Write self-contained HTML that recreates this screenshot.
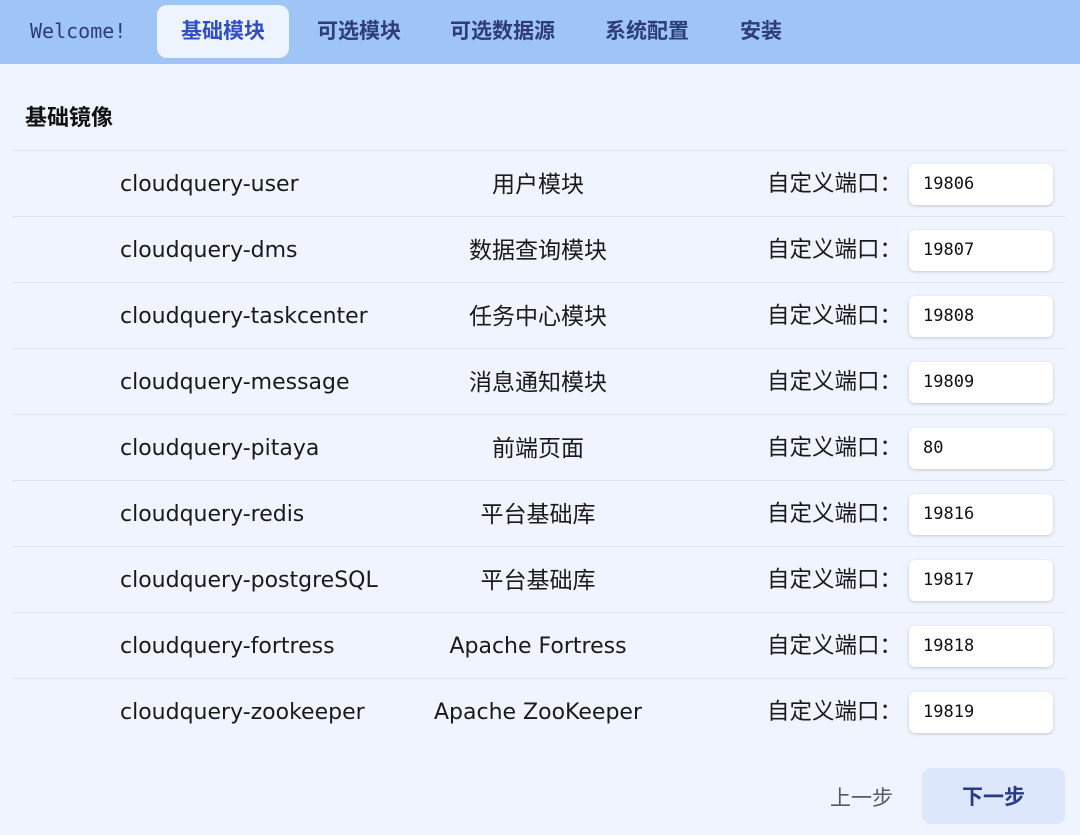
<!DOCTYPE html>
<html><head><meta charset="utf-8"><style>
*{margin:0;padding:0;box-sizing:border-box}
body{width:1080px;height:835px;background:#eff4fe;font-family:"DejaVu Sans","Noto Sans CJK SC",sans-serif;position:relative;overflow:hidden;color:#1a1a1a}
.hdr{position:absolute;left:0;top:0;width:1080px;height:64px;background:#9fc4f6}
.tab{position:absolute;top:5px;height:53px;line-height:53px;font-size:21px;color:#2e3d78;font-weight:bold;font-family:"Liberation Sans","Noto Sans CJK SC",sans-serif}
.act{background:#eef4fe;border-radius:10px;color:#2f4fc4;width:132px;left:157px;text-align:center}
.wel{font-family:"DejaVu Sans Mono",monospace;font-weight:normal;left:30px;color:#2e3d78;font-size:20px}
h2{position:absolute;left:25px;top:100px;font-size:22px;font-weight:bold;color:#111;font-family:"Liberation Sans","Noto Sans CJK SC",sans-serif}
.row{position:absolute;left:12px;width:1053px;height:66px;border-top:1px solid #dfe3ec}
.n{position:absolute;left:108px;top:1px;line-height:66px;font-size:22px;white-space:nowrap}
.m{position:absolute;left:376px;width:300px;text-align:center;top:1px;line-height:66px;font-size:22px;white-space:nowrap}
.l{position:absolute;left:755px;top:-2px;line-height:66px;font-size:22.5px;font-family:"Noto Sans CJK SC",sans-serif}
.i{position:absolute;left:897px;top:13px;width:144px;height:41px;background:#fff;border-radius:6px;box-shadow:0 1px 3px rgba(0,0,0,.18);font-family:"DejaVu Sans Mono",monospace;font-size:17px;line-height:41px;padding-left:14px;color:#111}
.prev{position:absolute;left:830px;top:783px;font-size:21px;color:#555b66;font-family:"Noto Sans CJK SC",sans-serif;line-height:28px}
.next{position:absolute;left:922px;top:768px;width:143px;height:56px;background:#dce7fb;border-radius:9px;text-align:center;line-height:56px;font-size:21px;color:#2b3a88;font-weight:bold;font-family:"Noto Sans CJK SC",sans-serif}
.m.c{font-size:23px}
</style></head><body>
<div class="hdr">
<div class="tab wel">Welcome!</div>
<div class="tab act">基础模块</div>
<div class="tab" style="left:317px">可选模块</div>
<div class="tab" style="left:450px">可选数据源</div>
<div class="tab" style="left:605px">系统配置</div>
<div class="tab" style="left:740px">安装</div>
</div>
<h2>基础镜像</h2>
<div class="row" style="top:150px"><div class="n">cloudquery-user</div><div class="m c">用户模块</div><div class="l">自定义端口：</div><div class="i">19806</div></div>
<div class="row" style="top:216px"><div class="n">cloudquery-dms</div><div class="m c">数据查询模块</div><div class="l">自定义端口：</div><div class="i">19807</div></div>
<div class="row" style="top:282px"><div class="n">cloudquery-taskcenter</div><div class="m c">任务中心模块</div><div class="l">自定义端口：</div><div class="i">19808</div></div>
<div class="row" style="top:348px"><div class="n">cloudquery-message</div><div class="m c">消息通知模块</div><div class="l">自定义端口：</div><div class="i">19809</div></div>
<div class="row" style="top:414px"><div class="n">cloudquery-pitaya</div><div class="m c">前端页面</div><div class="l">自定义端口：</div><div class="i">80</div></div>
<div class="row" style="top:480px"><div class="n">cloudquery-redis</div><div class="m c">平台基础库</div><div class="l">自定义端口：</div><div class="i">19816</div></div>
<div class="row" style="top:546px"><div class="n">cloudquery-postgreSQL</div><div class="m c">平台基础库</div><div class="l">自定义端口：</div><div class="i">19817</div></div>
<div class="row" style="top:612px"><div class="n">cloudquery-fortress</div><div class="m">Apache Fortress</div><div class="l">自定义端口：</div><div class="i">19818</div></div>
<div class="row" style="top:678px"><div class="n">cloudquery-zookeeper</div><div class="m">Apache ZooKeeper</div><div class="l">自定义端口：</div><div class="i">19819</div></div>
<div class="prev">上一步</div>
<div class="next">下一步</div>
</body></html>
